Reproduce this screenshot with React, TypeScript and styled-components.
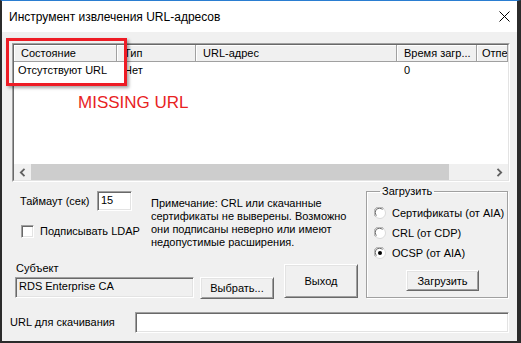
import React from 'react';
import styled, { createGlobalStyle } from 'styled-components';

const GlobalStyle = createGlobalStyle`
  html, body {
    margin: 0;
    padding: 0;
    background: #ffffff;
  }
  body {
    font-family: "Liberation Sans", Arial, sans-serif;
    font-size: 11px;
    color: #000;
  }
`;

const columns = [
  { title: 'Состояние', width: 103, pad: 7 },
  { title: 'Тип', width: 79, pad: 7 },
  { title: 'URL-адрес', width: 201, pad: 7 },
  { title: 'Время загр...', width: 80, pad: 7 },
  { title: 'Отпе', width: 31, pad: 5 },
];

const rows = [['Отсутствуют URL', 'Нет', '', '0', '']];

const Window = styled.div`
  position: relative;
  width: 521px;
  height: 343px;
  box-sizing: border-box;
  border-top: 1px solid #2a7dd1;
  border-left: 2px solid #2b2b2b;
  border-right: 4px solid #2b2b2b;
  border-bottom: 2px solid #2b2b2b;
  background: #f0f0f0;
  display: flex;
  flex-direction: column;
  overflow: hidden;
`;

const TitleBar = styled.div`
  height: 31px;
  flex-shrink: 0;
  background: #ffffff;
  display: flex;
  align-items: center;
  padding: 0 7px 0 7px;
  font-size: 12px;
`;

const CloseButton = styled.div`
  margin-left: auto;
  width: 11px;
  height: 11px;
  display: flex;
`;

const Client = styled.div`
  flex: 1;
  display: flex;
  flex-direction: column;
`;

/* sunken 3D frame: outer + inner */
const ListView = styled.div`
  margin: 11px 7px 0 10px;
  height: 139px;
  box-sizing: border-box;
  border: 1px solid;
  border-color: #a0a0a0 #ffffff #ffffff #a0a0a0;
`;

const ListInner = styled.div`
  height: 100%;
  box-sizing: border-box;
  border: 1px solid;
  border-color: #696969 #e3e3e3 #e3e3e3 #696969;
  background: #ffffff;
  display: flex;
  flex-direction: column;
  overflow: hidden;
`;

const HeaderRow = styled.div`
  height: 17px;
  flex-shrink: 0;
  display: flex;
  overflow: hidden;
`;

const HeaderCell = styled.div<{ $w: number; $pad: number }>`
  width: ${({ $w }) => $w}px;
  flex-shrink: 0;
  box-sizing: border-box;
  padding-left: ${({ $pad }) => $pad}px;
  background: #f0f0f0;
  border-right: 1px solid #a0a0a0;
  border-bottom: 1px solid #a0a0a0;
  box-shadow: inset 1px 1px 0 #ffffff;
  line-height: 16px;
  white-space: nowrap;
  overflow: hidden;
`;

const ListBody = styled.div`
  position: relative;
  flex: 1;
`;

const Row = styled.div`
  height: 16px;
  display: flex;
  align-items: center;
`;

const Cell = styled.div<{ $w: number; $pad: number }>`
  width: ${({ $w }) => $w}px;
  flex-shrink: 0;
  box-sizing: border-box;
  padding-left: ${({ $pad }) => $pad}px;
  white-space: nowrap;
  overflow: hidden;
`;

const MissingNote = styled.div`
  position: absolute;
  left: 64px;
  top: 31px;
  font-size: 17px;
  line-height: 20px;
  color: #e8231f;
  white-space: nowrap;
`;

const ScrollBar = styled.div`
  height: 16px;
  flex-shrink: 0;
  display: flex;
  background: #f0f0f0;
`;

const ScrollArrow = styled.div`
  width: 17px;
  flex-shrink: 0;
  display: flex;
  align-items: center;
  justify-content: center;
`;

const ScrollTrack = styled.div`
  flex: 1;
  display: flex;
`;

const ScrollThumb = styled.div<{ $w: number }>`
  width: ${({ $w }) => $w}px;
  background: #cdcdcd;
`;

const Lower = styled.div`
  display: flex;
  margin-top: 3px;
  height: 114px;
`;

const LeftPane = styled.div`
  width: 356px;
  flex-shrink: 0;
  display: flex;
  flex-direction: column;
`;

const TopRow = styled.div`
  height: 78px;
  display: flex;
`;

const Controls = styled.div`
  width: 131px;
  flex-shrink: 0;
  padding-left: 18px;
  display: flex;
  flex-direction: column;
`;

const TimeoutRow = styled.div`
  margin-top: 6px;
  height: 20px;
  display: flex;
  align-items: center;
`;

const Label = styled.span<{ $w?: number }>`
  display: inline-block;
  width: ${({ $w }) => ($w ? `${$w}px` : 'auto')};
  flex-shrink: 0;
  white-space: nowrap;
  line-height: 13px;
`;

const Edit = styled.div<{ $w: number; $h: number; $readOnly?: boolean }>`
  width: ${({ $w }) => $w}px;
  height: ${({ $h }) => $h}px;
  flex-shrink: 0;
  box-sizing: border-box;
  border: 1px solid;
  border-color: #a0a0a0 #ffffff #ffffff #a0a0a0;
  box-shadow: inset 1px 1px 0 #696969, inset -1px -1px 0 #e3e3e3;
  background: ${({ $readOnly }) => ($readOnly ? '#f0f0f0' : '#ffffff')};
  padding: 2px 0 0 3px;
  line-height: 13px;
  white-space: nowrap;
  overflow: hidden;
`;

const CheckRow = styled.div`
  margin-top: 14px;
  height: 13px;
  display: flex;
  align-items: center;
  padding-left: 1px;
  gap: 6px;
`;

const CheckBox = styled.div`
  width: 13px;
  height: 13px;
  flex-shrink: 0;
  box-sizing: border-box;
  border: 1px solid;
  border-color: #a0a0a0 #ffffff #ffffff #a0a0a0;
  box-shadow: inset 1px 1px 0 #696969, inset -1px -1px 0 #e3e3e3;
  background: #ffffff;
`;

const Note = styled.div`
  margin-top: 12px;
  width: 205px;
  line-height: 13px;
`;

const BottomRow = styled.div`
  flex: 1;
  display: flex;
  align-items: flex-start;
`;

const SubjectCol = styled.div`
  margin-left: 13px;
  display: flex;
  flex-direction: column;
`;

const SubjectLabel = styled(Label)`
  margin: -1px 0 0 1px;
`;

const SubjectEdit = styled(Edit)`
  margin-top: 2px;
`;

const Button = styled.button<{ $w: number; $h: number; $mt: number; $ml: number }>`
  width: ${({ $w }) => $w}px;
  height: ${({ $h }) => $h}px;
  margin: ${({ $mt }) => $mt}px 0 0 ${({ $ml }) => $ml}px;
  flex-shrink: 0;
  box-sizing: border-box;
  padding: 0;
  font: inherit;
  color: #000;
  background: #f0f0f0;
  border: 1px solid;
  border-color: #ffffff #696969 #696969 #ffffff;
  box-shadow: inset 1px 1px 0 #e3e3e3, inset -1px -1px 0 #a0a0a0;
  border-radius: 0;
`;

const GroupBox = styled.fieldset`
  margin: 0 0 0 8px;
  padding: 0 0 0 7px;
  width: 142px;
  height: 113px;
  box-sizing: border-box;
  min-inline-size: 0;
  border: 1px solid #a0a0a0;
  box-shadow: inset 1px 1px 0 #ffffff, 1px 1px 0 #ffffff;
  display: flex;
  flex-direction: column;
`;

const Legend = styled.legend`
  margin-left: 6px;
  padding: 0 2px;
  line-height: 13px;
`;

const RadioList = styled.div`
  margin-top: 8px;
  display: flex;
  flex-direction: column;
  gap: 7px;
`;

const RadioRow = styled.div`
  height: 13px;
  display: flex;
  align-items: center;
  gap: 6px;
  white-space: nowrap;
`;

const Radio: React.FC<{ checked?: boolean }> = ({ checked }) => (
  <svg width="12" height="12" viewBox="0 0 12 12">
    <circle cx="6" cy="6" r="5.5" fill="#ffffff" stroke="#d9d9d9" />
    <path d="M1.5 9.5 A5 5 0 0 1 9.5 1.5" fill="none" stroke="#a0a0a0" />
    <path d="M2.5 8.5 A4 4 0 0 1 8.5 2.5" fill="none" stroke="#696969" />
    {checked && <circle cx="6" cy="6" r="2" fill="#000" />}
  </svg>
);

const UrlRow = styled.div`
  margin-top: 13px;
  height: 21px;
  display: flex;
  align-items: center;
  padding-left: 8px;
`;

const Highlight = styled.div`
  position: absolute;
  left: 4px;
  top: 37px;
  width: 121px;
  height: 48px;
  box-sizing: border-box;
  border: 3px solid #ee1c25;
  box-shadow: 2px 2px 3px rgba(0, 0, 0, 0.35);
  pointer-events: none;
`;

const App: React.FC = () => {
  return (
    <>
      <GlobalStyle />
      <Window>
        <TitleBar>
          <span>Инструмент извлечения URL-адресов</span>
          <CloseButton>
            <svg width="11" height="11" viewBox="0 0 11 11">
              <path d="M0.5 0.5 L10.5 10.5 M10.5 0.5 L0.5 10.5" stroke="#000" strokeWidth="1" />
            </svg>
          </CloseButton>
        </TitleBar>
        <Client>
          <ListView>
            <ListInner>
              <HeaderRow>
                {columns.map((c) => (
                  <HeaderCell key={c.title} $w={c.width} $pad={c.pad}>
                    {c.title}
                  </HeaderCell>
                ))}
              </HeaderRow>
              <ListBody>
                {rows.map((r, i) => (
                  <Row key={i}>
                    {r.map((v, j) => (
                      <Cell key={j} $w={columns[j].width} $pad={j === 0 ? 4 : 7}>
                        {v}
                      </Cell>
                    ))}
                  </Row>
                ))}
                <MissingNote>MISSING URL</MissingNote>
              </ListBody>
              <ScrollBar>
                <ScrollArrow>
                  <svg width="7" height="9" viewBox="0 0 7 9">
                    <path d="M5.5 0.8 L1.8 4.5 L5.5 8.2" fill="none" stroke="#606060" strokeWidth="1.8" />
                  </svg>
                </ScrollArrow>
                <ScrollTrack>
                  <ScrollThumb $w={418} />
                </ScrollTrack>
                <ScrollArrow>
                  <svg width="7" height="9" viewBox="0 0 7 9">
                    <path d="M1.5 0.8 L5.2 4.5 L1.5 8.2" fill="none" stroke="#606060" strokeWidth="1.8" />
                  </svg>
                </ScrollArrow>
              </ScrollBar>
            </ListInner>
          </ListView>

          <Lower>
            <LeftPane>
              <TopRow>
                <Controls>
                  <TimeoutRow>
                    <Label $w={77}>Таймаут (сек)</Label>
                    <Edit $w={35} $h={20}>15</Edit>
                  </TimeoutRow>
                  <CheckRow>
                    <CheckBox />
                    <Label>Подписывать LDAP</Label>
                  </CheckRow>
                </Controls>
                <Note>
                  Примечание: CRL или скачанные сертификаты не выверены. Возможно они подписаны
                  неверно или имеют недопустимые расширения.
                </Note>
              </TopRow>
              <BottomRow>
                <SubjectCol>
                  <SubjectLabel>Субъект</SubjectLabel>
                  <SubjectEdit $w={179} $h={21} $readOnly>
                    RDS Enterprise CA
                  </SubjectEdit>
                </SubjectCol>
                <Button $w={74} $h={22} $mt={14} $ml={6}>
                  Выбрать...
                </Button>
                <Button $w={74} $h={34} $mt={1} $ml={10}>
                  Выход
                </Button>
              </BottomRow>
            </LeftPane>

            <GroupBox>
              <Legend>Загрузить</Legend>
              <RadioList>
                <RadioRow>
                  <Radio />
                  <span>Сертификаты (от AIA)</span>
                </RadioRow>
                <RadioRow>
                  <Radio />
                  <span>CRL (от CDP)</span>
                </RadioRow>
                <RadioRow>
                  <Radio checked />
                  <span>OCSP (от AIA)</span>
                </RadioRow>
              </RadioList>
              <Button $w={73} $h={21} $mt={11} $ml={32}>
                Загрузить
              </Button>
            </GroupBox>
          </Lower>

          <UrlRow>
            <Label $w={125}>URL для скачивания</Label>
            <Edit $w={374} $h={21} />
          </UrlRow>
        </Client>
        <Highlight />
      </Window>
    </>
  );
};

export default App;
